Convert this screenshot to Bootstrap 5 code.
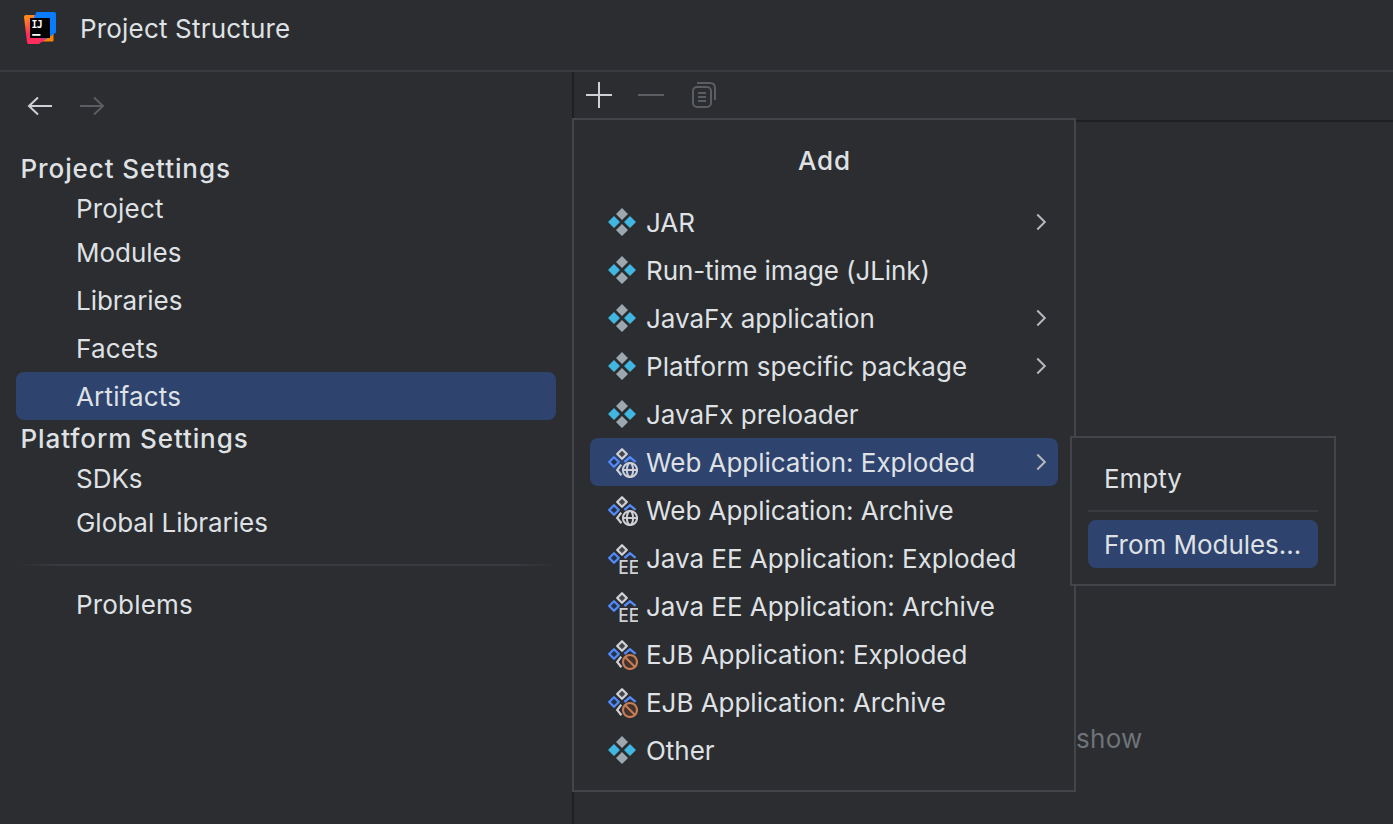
<!DOCTYPE html>
<html lang="en" data-bs-theme="dark">
<head>
<meta charset="utf-8">
<title>Project Structure</title>
<link href="https://cdn.jsdelivr.net/npm/bootstrap@5.3.0/dist/css/bootstrap.min.css" rel="stylesheet">
<style>
  body { background: #2b2d30; color: #dfe1e5; font: 400 26px/1 Inter, sans-serif; letter-spacing: -.03px; }
  svg { display: block; flex: none; }
  .title-bar { height: 72px; border-bottom: 2px solid #393b40; padding: 0 24px 14px; gap: 24px; }
  .side { width: 572px; padding: 0 16px; }
  .history { height: 76px; padding: 8px 8px 16px; gap: 20px; }
  .group-title { height: 40px; padding-left: 4.5px; font-weight: 500; letter-spacing: .9px; }
  .group-title.tight { height: 38px; padding-bottom: 2px; }
  .side-item { height: 48px; padding-left: 60px; border-radius: 8px; }
  .side-item.first { height: 40px; }
  .loose { letter-spacing: .18px; }
  .snug { letter-spacing: -.1px; }
  .chosen { background: #2e436e; }
  .side-rule { height: 2px; margin: 18px 0 14px; background: linear-gradient(90deg, transparent, #393b40 8%, #393b40 92%, transparent); }
  .main-pane { border-left: 2px solid #1e1f22; }
  .tools { height: 50px; border-bottom: 2px solid #1e1f22; padding: 0 9px 2px; gap: 20px; }
  .popup { background: #2b2d30; border: 2px solid #43454a; padding: 16px; }
  .add-menu { left: -2px; top: 46px; width: 504px; height: 674px; }
  .add-title { height: 62px; font-weight: 500; padding: 0 0 15px 1px; letter-spacing: .9px; }
  .menu-row { height: 48px; padding: 0 0 0 16px; border-radius: 8px; gap: 8px; }
  .sub-menu { left: 496px; top: 364px; width: 266px; height: 150px; }
  .sub-rule { height: 2px; margin: 8px 0; background: #393b40; }
  .hint { left: 502px; top: 654px; color: #6f737a; letter-spacing: .3px; }
  .txt { position: relative; top: 1px; white-space: nowrap; }
</style>
</head>
<body class="vh-100 overflow-hidden d-flex flex-column">
<svg width="0" height="0" class="position-absolute">
  <defs>
    <linearGradient id="warm" x1="0" y1="0" x2=".35" y2="1"><stop offset=".1" stop-color="#ff8a1a"/><stop offset=".65" stop-color="#ff2d5e"/></linearGradient>
    <linearGradient id="mix" x1="0" y1="1" x2="1" y2="0"><stop offset=".2" stop-color="#ff2d5e"/><stop offset=".45" stop-color="#087cfa"/></linearGradient>
    <symbol id="artifact" viewBox="0 0 32 32">
      <path fill="#9da7b0" d="M16 2l6 6-6 6-6-6zM16 18l6 6-6 6-6-6z"/>
      <path fill="#40b6e0" d="M8 10l6 6-6 6-6-6zM24 10l6 6-6 6-6-6z"/>
    </symbol>
    <symbol id="outline" viewBox="0 0 32 32">
      <path d="M16 3.200l4.800 4.800-4.800 4.800-4.800-4.800z" fill="#43454a" stroke="#ced0d6" stroke-width="2.300" stroke-linejoin="round"/>
      <path d="M8 11.200l4.800 4.800-4.800 4.800-4.800-4.800z" fill="#25324d" stroke="#548af7" stroke-width="2.300" stroke-linejoin="round"/>
      <path d="M18.400 16l5.600-4.700 5.600 4.500" fill="none" stroke="#548af7" stroke-width="2.300"/>
    </symbol>
    <symbol id="web" viewBox="0 0 32 32"><use href="#outline"/>
      <path d="M15.200 18.700L11.200 24l4.200 5.200" fill="none" stroke="#ced0d6" stroke-width="2.200"/>
      <g fill="none" stroke="#ced0d6" stroke-width="2"><circle cx="24" cy="24" r="7.100"/><ellipse cx="24" cy="24" rx="3.100" ry="7.100"/><path d="M17 24h14"/></g>
    </symbol>
    <symbol id="ee" viewBox="0 0 32 32"><use href="#outline"/>
      <path d="M14 17h18v15H14z" fill="#2b2d30"/>
      <text x="12.300" y="32" font-size="18.500" font-weight="500" letter-spacing="0" textLength="21" lengthAdjust="spacingAndGlyphs" fill="#ced0d6">EE</text>
    </symbol>
    <symbol id="ejb" viewBox="0 0 32 32"><use href="#outline"/>
      <path d="M15.200 18.700L11.200 24l4.200 5.200" fill="none" stroke="#ced0d6" stroke-width="2.200"/>
      <g fill="#45322b" stroke="#c77d55" stroke-width="2.100"><circle cx="24" cy="24" r="7"/><path d="M19 19l10 10"/></g>
    </symbol>
    <symbol id="chev" viewBox="0 0 32 32"><path d="M11.300 8.500l7.500 7.500-7.500 7.500" fill="none" stroke="#b4b8bf" stroke-width="2"/></symbol>
  </defs>
</svg>

<header class="title-bar d-flex align-items-center flex-shrink-0">
  <svg width="32" height="32" viewBox="0 0 32 32">
    <path d="M29 17v12H18z" fill="#ff8100" stroke="#ff8100"/>
    <path d="M2 3h10l16 18-13 11H4.500Q3 32 3 30L0 5q0-2 2-2z" fill="url(#warm)"/>
    <path d="M12.500 0H30q2 0 2 2v18.500L18 30 10 5z" fill="url(#mix)"/>
    <path d="M6 6h20v20H6z"/>
    <text x="7.600" y="15.500" font-family="'DejaVu Sans Mono', monospace" font-weight="700" font-size="9.800" letter-spacing="-.8" fill="#fff">IJ</text>
    <path d="M8.200 22h8.300v1.800h-8.300z" fill="#fff"/>
  </svg>
  <span class="txt loose">Project Structure</span>
</header>

<div class="d-flex flex-grow-1">
  <nav class="side flex-shrink-0">
    <div class="history d-flex align-items-center">
      <svg width="32" height="32" viewBox="0 0 32 32" fill="none" stroke="#ced0d6" stroke-width="2"><path d="M28 16H5.500M14 7.500L5 16l9 8.500"/></svg>
      <svg width="32" height="32" viewBox="0 0 32 32" fill="none" stroke="#5a5d61" stroke-width="2"><path d="M4 16h22.500M18 7.500l9 8.500-9 8.500"/></svg>
    </div>
    <div class="group-title d-flex align-items-center"><span class="txt">Project Settings</span></div>
    <div class="side-item first d-flex align-items-center"><span class="txt loose">Project</span></div>
    <div class="side-item d-flex align-items-center"><span class="txt">Modules</span></div>
    <div class="side-item d-flex align-items-center"><span class="txt">Libraries</span></div>
    <div class="side-item d-flex align-items-center"><span class="txt loose">Facets</span></div>
    <div class="side-item chosen d-flex align-items-center"><span class="txt loose">Artifacts</span></div>
    <div class="group-title tight d-flex align-items-center"><span class="txt">Platform Settings</span></div>
    <div class="side-item first d-flex align-items-center"><span class="txt">SDKs</span></div>
    <div class="side-item d-flex align-items-center"><span class="txt">Global Libraries</span></div>
    <div class="side-rule"></div>
    <div class="side-item d-flex align-items-center"><span class="txt loose">Problems</span></div>
  </nav>

  <main class="main-pane flex-grow-1 position-relative">
    <div class="tools d-flex align-items-center">
      <svg width="32" height="32" viewBox="0 0 32 32" stroke="#ced0d6" stroke-width="2"><path d="M3 16h26M16 3v26"/></svg>
      <svg width="32" height="32" viewBox="0 0 32 32" stroke="#5a5d61" stroke-width="2"><path d="M3 16h26"/></svg>
      <svg width="32" height="32" viewBox="0 0 32 32" fill="none" stroke="#5a5d61" stroke-width="2"><rect x="6" y="8" width="18" height="20" rx="4"/><path d="M10 4h13q5 0 5 5v12M11 14h8M11 18h8M11 22h8"/></svg>
    </div>
    <span class="hint position-absolute">show</span>

    <div class="popup add-menu position-absolute">
      <div class="add-title d-flex align-items-center justify-content-center"><span class="txt">Add</span></div>
      <div class="menu-row d-flex align-items-center"><svg width="32" height="32"><use href="#artifact"/></svg><span class="txt flex-grow-1">JAR</span><svg width="32" height="32"><use href="#chev"/></svg></div>
      <div class="menu-row d-flex align-items-center"><svg width="32" height="32"><use href="#artifact"/></svg><span class="txt snug">Run-time image (JLink)</span></div>
      <div class="menu-row d-flex align-items-center"><svg width="32" height="32"><use href="#artifact"/></svg><span class="txt flex-grow-1">JavaFx application</span><svg width="32" height="32"><use href="#chev"/></svg></div>
      <div class="menu-row d-flex align-items-center"><svg width="32" height="32"><use href="#artifact"/></svg><span class="txt flex-grow-1" style="letter-spacing:.06px">Platform specific package</span><svg width="32" height="32"><use href="#chev"/></svg></div>
      <div class="menu-row d-flex align-items-center"><svg width="32" height="32"><use href="#artifact"/></svg><span class="txt">JavaFx preloader</span></div>
      <div class="menu-row chosen d-flex align-items-center"><svg width="32" height="32"><use href="#web"/></svg><span class="txt flex-grow-1">Web Application: Exploded</span><svg width="32" height="32"><use href="#chev"/></svg></div>
      <div class="menu-row d-flex align-items-center"><svg width="32" height="32"><use href="#web"/></svg><span class="txt">Web Application: Archive</span></div>
      <div class="menu-row d-flex align-items-center"><svg width="32" height="32"><use href="#ee"/></svg><span class="txt">Java EE Application: Exploded</span></div>
      <div class="menu-row d-flex align-items-center"><svg width="32" height="32"><use href="#ee"/></svg><span class="txt">Java EE Application: Archive</span></div>
      <div class="menu-row d-flex align-items-center"><svg width="32" height="32"><use href="#ejb"/></svg><span class="txt">EJB Application: Exploded</span></div>
      <div class="menu-row d-flex align-items-center"><svg width="32" height="32"><use href="#ejb"/></svg><span class="txt">EJB Application: Archive</span></div>
      <div class="menu-row d-flex align-items-center"><svg width="32" height="32"><use href="#artifact"/></svg><span class="txt">Other</span></div>
    </div>

    <div class="popup sub-menu position-absolute">
      <div class="menu-row d-flex align-items-center"><span class="txt">Empty</span></div>
      <div class="sub-rule"></div>
      <div class="menu-row chosen d-flex align-items-center"><span class="txt">From Modules...</span></div>
    </div>
  </main>
</div>
<script src="https://cdn.jsdelivr.net/npm/bootstrap@5.3.0/dist/js/bootstrap.bundle.min.js"></script>
</body>
</html>
